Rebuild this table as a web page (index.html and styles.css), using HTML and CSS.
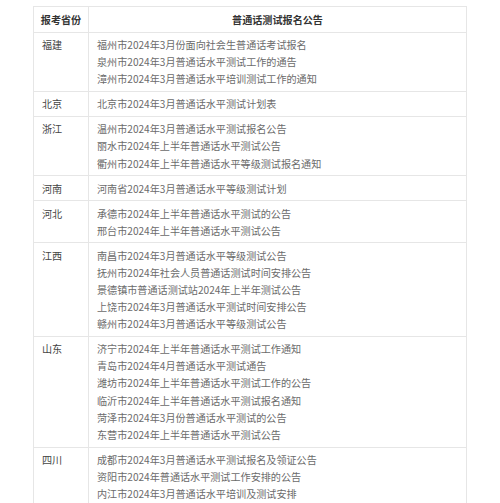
FILE: index.html
```html
<!DOCTYPE html>
<html lang="zh-CN">
<head>
<meta charset="utf-8">
<title>普通话测试报名公告</title>
<link rel="stylesheet" href="styles.css">
</head>
<body>
<table class="notice-table">
  <thead>
    <tr>
      <th class="col-prov">报考省份</th>
      <th class="col-list">普通话测试报名公告</th>
    </tr>
  </thead>
  <tbody>
    <tr>
      <td class="prov">福建</td>
      <td class="links">
        <a>福州市2024年3月份面向社会生普通话考试报名</a>
        <a>泉州市2024年3月普通话水平测试工作的通告</a>
        <a>漳州市2024年3月普通话水平培训测试工作的通知</a>
      </td>
    </tr>
    <tr>
      <td class="prov">北京</td>
      <td class="links">
        <a>北京市2024年3月普通话水平测试计划表</a>
      </td>
    </tr>
    <tr>
      <td class="prov">浙江</td>
      <td class="links">
        <a>温州市2024年3月普通话水平测试报名公告</a>
        <a>丽水市2024年上半年普通话水平测试公告</a>
        <a>衢州市2024年上半年普通话水平等级测试报名通知</a>
      </td>
    </tr>
    <tr>
      <td class="prov">河南</td>
      <td class="links">
        <a>河南省2024年3月普通话水平等级测试计划</a>
      </td>
    </tr>
    <tr>
      <td class="prov">河北</td>
      <td class="links">
        <a>承德市2024年上半年普通话水平测试的公告</a>
        <a>邢台市2024年上半年普通话水平测试公告</a>
      </td>
    </tr>
    <tr>
      <td class="prov">江西</td>
      <td class="links">
        <a>南昌市2024年3月普通话水平等级测试公告</a>
        <a>抚州市2024年社会人员普通话测试时间安排公告</a>
        <a>景德镇市普通话测试站2024年上半年测试公告</a>
        <a>上饶市2024年3月普通话水平测试时间安排公告</a>
        <a>赣州市2024年3月普通话水平等级测试公告</a>
      </td>
    </tr>
    <tr>
      <td class="prov">山东</td>
      <td class="links">
        <a>济宁市2024年上半年普通话水平测试工作通知</a>
        <a>青岛市2024年4月普通话水平测试通告</a>
        <a>潍坊市2024年上半年普通话水平测试工作的公告</a>
        <a>临沂市2024年上半年普通话水平测试报名通知</a>
        <a>菏泽市2024年3月份普通话水平测试的公告</a>
        <a>东营市2024年上半年普通话水平测试公告</a>
      </td>
    </tr>
    <tr>
      <td class="prov">四川</td>
      <td class="links">
        <a>成都市2024年3月普通话水平测试报名及领证公告</a>
        <a>资阳市2024年普通话水平测试工作安排的公告</a>
        <a>内江市2024年3月普通话水平培训及测试安排</a>
      </td>
    </tr>
  </tbody>
</table>
</body>
</html>
```
FILE: styles.css
```css
html, body {
  margin: 0;
  padding: 0;
  background: #ffffff;
}

body {
  font-family: "Noto Sans CJK SC", "Noto Sans", sans-serif;
  font-size: 10.1px;
  line-height: 17.15px;
  color: #333333;
}

.notice-table {
  border-collapse: collapse;
  width: 434px;
  margin: 6px 0 0 33px;
  table-layout: fixed;
}

.notice-table th,
.notice-table td {
  border: 1px solid #e6e6e6;
  padding: 3.4px 8px;
  vertical-align: top;
}

.notice-table th {
  padding: 3.8px 2px;
  font-weight: bold;
  color: #333333;
  text-align: center;
  white-space: nowrap;
}

.col-prov {
  box-sizing: border-box;
  width: 55px;
}

.prov {
  color: #444444;
}

.links a {
  display: block;
  color: #6b6b6b;
  text-decoration: none;
  white-space: nowrap;
}
```
